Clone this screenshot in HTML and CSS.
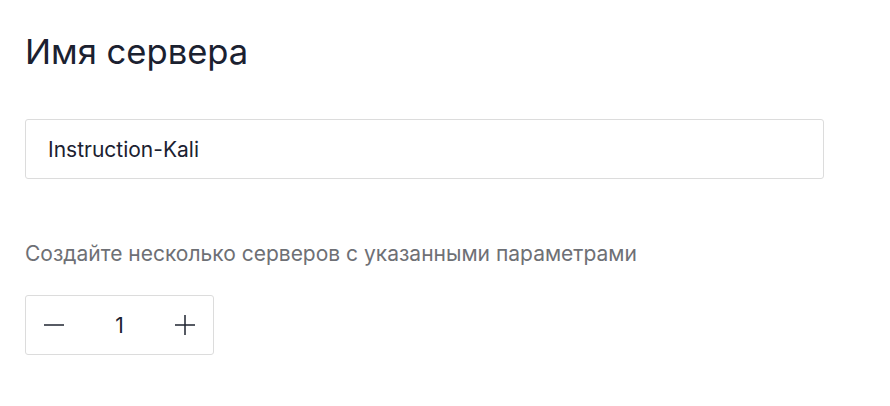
FILE: index.html
```html
<!DOCTYPE html>
<html lang="ru">
<head>
<meta charset="utf-8">
<link rel="stylesheet" href="styles.css">
</head>
<body>
<main class="page">
  <h1 class="title">Имя сервера</h1>
  <div class="field">
    <input class="input" type="text" value="Instruction-Kali">
  </div>
  <p class="hint">Создайте несколько серверов с указанными параметрами</p>
  <div class="stepper">
    <button class="step-btn" aria-label="Уменьшить">
      <svg width="20" height="20" viewBox="0 0 20 20"><path d="M0 10H20" stroke="#1f2430" stroke-width="1.5"/></svg>
    </button>
    <span class="count">1</span>
    <button class="step-btn" aria-label="Увеличить">
      <svg width="20" height="20" viewBox="0 0 20 20"><path d="M0 10H20M10 0V20" stroke="#1f2430" stroke-width="1.5"/></svg>
    </button>
  </div>
</main>
</body>
</html>
```

FILE: styles.css
```css
* { box-sizing: border-box; }
html, body { margin: 0; background: #fff; }
body {
  font-family: Inter, "Noto Sans", sans-serif;
  color: #1b2130;
}
.page {
  padding: 30px 25px 0 25px;
  width: 849px;
}
.title {
  margin: 0;
  font-size: 34.6px;
  font-weight: 400;
  line-height: 42px;
  color: #1b2130;
}
.field {
  margin-top: 47px;
}
.input {
  display: block;
  width: 799px;
  height: 60px;
  border: 1px solid #dcdcdc;
  border-radius: 3px;
  padding: 0 22px;
  font-family: inherit;
  font-size: 21px;
  color: #1b2130;
  outline: none;
}
.hint {
  margin: 60px 0 0;
  font-size: 21px;
  line-height: 30px;
  color: #6e7075;
}
.stepper {
  margin-top: 26px;
  width: 189px;
  height: 60px;
  border: 1px solid #dcdcdc;
  border-radius: 3px;
  display: flex;
  align-items: center;
  justify-content: space-between;
  padding: 0 18px;
}
.step-btn {
  background: none;
  border: 0;
  padding: 0;
  width: 20px;
  height: 20px;
  display: flex;
  cursor: pointer;
}
.count {
  font-size: 21px;
  color: #1b2130;
}
```
